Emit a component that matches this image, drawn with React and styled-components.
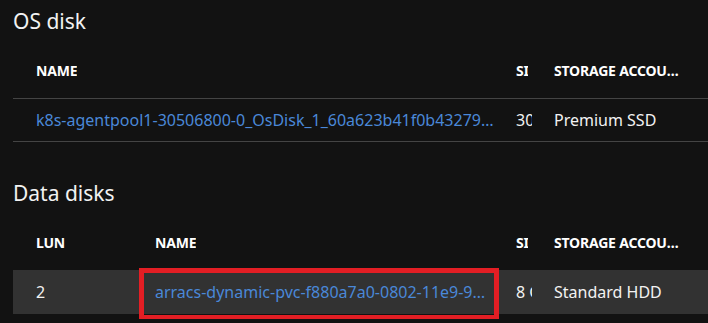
import React from "react";
import styled, { createGlobalStyle, css } from "styled-components";

const Global = createGlobalStyle`
  html, body { margin: 0; padding: 0; background: #121212; }
  body {
    font-family: "Noto Sans", "Open Sans", sans-serif;
    color: #f2f2f2;
    width: 708px;
    height: 323px;
    overflow: hidden;
  }
`;

const Page = styled.div`
  display: flex;
  flex-direction: column;
`;

const Section = styled.section`
  display: flex;
  flex-direction: column;
  padding-left: 13px;
  & + & { margin-top: 30px; }
`;

const Title = styled.h2`
  margin: 0;
  padding-top: 7px;
  margin-bottom: 7px;
  font-size: 21px;
  line-height: 28px;
  font-weight: 400;
  color: #f2f2f2;
`;

const Table = styled.div`
  display: flex;
  flex-direction: column;
`;

const Row = styled.div`
  display: grid;
  grid-template-columns: ${(p) => p.$cols};
  padding-left: 12px;
  align-items: center;
  height: ${(p) => (p.$header ? "56px" : "44px")};
  ${(p) =>
    !p.$header &&
    css`
      border-top: 1px solid ${p.$selected ? "#323232" : "#444444"};
      border-bottom: 1px solid ${p.$selected ? "#323232" : "#444444"};
      height: 42px;
    `}
  background: ${(p) => (p.$selected ? "#323232" : "transparent")};
`;

const Cell = styled.div`
  position: relative;
  padding: 0 ${(p) => (p.$head ? "15px" : "11px")} 0 11px;
  min-width: 0;
  height: 100%;
  display: flex;
  align-items: center;
  ${(p) =>
    p.$marked &&
    css`
      &::after {
        content: "";
        position: absolute;
        left: -5px;
        right: 6px;
        top: -3px;
        bottom: -6px;
        border: 5px solid #e31e24;
        border-bottom-width: 4px;
        pointer-events: none;
      }
    `}
`;

const Text = styled.span`
  display: block;
  min-width: 0;
  white-space: nowrap;
  overflow: hidden;
  text-overflow: ${(p) => (p.$clip ? "clip" : "ellipsis")};
  font-size: 16px;
  color: ${(p) => (p.$link ? "#4a88d8" : "#f2f2f2")};
`;

const Head = styled(Text)`
  font-size: 14px;
  font-weight: 700;
  color: #ffffff;
  letter-spacing: -0.2px;
`;

const osCols = "480px 38px 152px";
const dataCols = "119px 361px 38px 152px";

export default function App() {
  return (
    <Page>
      <Global />
      <Section>
        <Title>OS disk</Title>
        <Table>
          <Row $header $cols={osCols}>
            <Cell $head><Head>NAME</Head></Cell>
            <Cell $head><Head $clip>SIZE</Head></Cell>
            <Cell $head><Head>STORAGE ACCOUNT TYPE</Head></Cell>
          </Row>
          <Row $cols={osCols}>
            <Cell><Text $link>k8s-agentpool1-30506800-0_OsDisk_1_60a623b41f0b432796d4f1a2c3b5e7d9</Text></Cell>
            <Cell><Text $clip>30 GiB</Text></Cell>
            <Cell><Text>Premium SSD</Text></Cell>
          </Row>
        </Table>
      </Section>
      <Section>
        <Title>Data disks</Title>
        <Table>
          <Row $header $cols={dataCols}>
            <Cell $head><Head>LUN</Head></Cell>
            <Cell $head><Head>NAME</Head></Cell>
            <Cell $head><Head $clip>SIZE</Head></Cell>
            <Cell $head><Head>STORAGE ACCOUNT TYPE</Head></Cell>
          </Row>
          <Row $selected $cols={dataCols}>
            <Cell><Text>2</Text></Cell>
            <Cell $marked><Text $link>arracs-dynamic-pvc-f880a7a0-0802-11e9-9a5c-000d3a1b2c3d</Text></Cell>
            <Cell><Text $clip>8 GiB</Text></Cell>
            <Cell><Text>Standard HDD</Text></Cell>
          </Row>
        </Table>
      </Section>
    </Page>
  );
}
